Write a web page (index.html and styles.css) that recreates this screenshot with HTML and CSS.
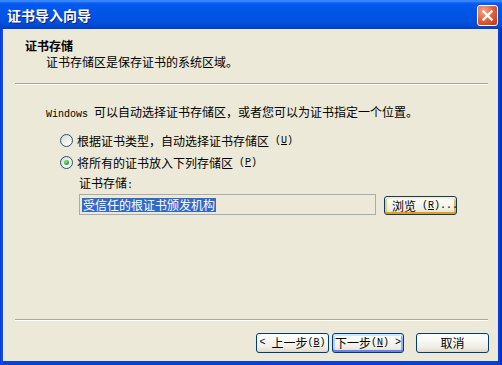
FILE: index.html
```html
<!DOCTYPE html>
<html>
<head>
<meta charset="utf-8">
<link rel="stylesheet" href="styles.css">
</head>
<body>
<div class="window">
  <div class="titlebar">
    <span class="title">证书导入向导</span>
    <div class="close">
      <svg width="19" height="19" viewBox="0 0 19 19"><path d="M5.5 5.5 L13.5 13.5 M13.5 5.5 L5.5 13.5" stroke="#fff" stroke-width="2.4" stroke-linecap="square" fill="none"/></svg>
    </div>
  </div>
  <div class="client">
    <div class="header">
      <div class="h-title">证书存储</div>
      <div class="h-sub">证书存储区是保存证书的系统区域。</div>
    </div>
    <div class="sep"></div>
    <div class="content">
      <div class="intro"><span class="lat">Windows </span>可以自动选择证书存储区，或者您可以为证书指定一个位置。</div>
      <div class="radio-row"><span class="radio"></span>根据证书类型，自动选择证书存储区<span class="lat"> (<u>U</u>)</span></div>
      <div class="radio-row second"><span class="radio checked"></span>将所有的证书放入下列存储区<span class="lat"> (<u>P</u>)</span></div>
      <div class="field-label">证书存储<span class="lat">:</span></div>
      <div class="store-row">
        <div class="field"><span class="sel">受信任的根证书颁发机构</span></div>
        <div class="btn browse">浏览<span class="lat"> (<u>R</u>)...</span></div>
      </div>
    </div>
    <div class="sep"></div>
    <div class="actions">
      <div class="btn back"><span class="lat">&lt; </span>上一步<span class="lat">(<u>B</u>)</span></div>
      <div class="btn next">下一步<span class="lat">(<u>N</u>) &gt;</span></div>
      <div class="btn cancel">取消</div>
    </div>
  </div>
</div>
</body>
</html>
```
FILE: styles.css
```css
html, body {
  margin: 0;
  padding: 0;
  background: #ece9d8;
}
.window {
  width: 502px;
  height: 365px;
  display: flex;
  flex-direction: column;
  background: linear-gradient(to right, #0831d9 0, #1657e6 2px, #0a3fd8 3px, #0a3fd8 498px, #0a3ad6 500px, #0024b0 502px);
  font-family: "Noto Sans CJK SC", "Liberation Sans", sans-serif;
  font-size: 12px;
  color: #000;
}
.titlebar {
  height: 29px;
  flex: none;
  display: flex;
  align-items: center;
  justify-content: space-between;
  padding: 0 4px 0 7px;
  box-sizing: border-box;
  background: linear-gradient(to bottom, #2b7cf7 0, #3f8fff 1px, #0f5ef0 3px, #0058ee 5px, #0055e8 12px, #0053e2 18px, #0050dc 23px, #0046cf 27px, #003dc0 29px);
}
.title {
  color: #fff;
  font-weight: bold;
  font-size: 14px;
  line-height: 18px;
  margin-top: 1px;
  text-shadow: 1px 1px 0 #0a1e8a;
  letter-spacing: 0;
}
.close {
  width: 19px;
  height: 19px;
  margin-top: 2px;
  border: 1px solid #fff;
  border-radius: 3px;
  background: radial-gradient(circle at 30% 25%, #f3a487 0, #e4663f 45%, #cf4420 80%, #c13512 100%);
  display: flex;
  align-items: center;
  justify-content: center;
}
.close svg { display: block; }
.client {
  flex: 1;
  margin: 0 4px 4px 3px;
  background: #ece9d8;
  display: flex;
  flex-direction: column;
  border-left: 1px solid #f4f2e8;
}
.header {
  height: 54px;
  flex: none;
  box-sizing: border-box;
  padding: 9px 0 0 21px;
}
.h-title {
  font-weight: bold;
  line-height: 16px;
}
.h-sub {
  line-height: 16px;
  margin-left: 21px;
}
.sep {
  flex: none;
  height: 0;
  margin: 0 10px 0 11px;
  border-top: 1px solid #aca899;
  border-bottom: 1px solid #fff;
}
.content {
  flex: 1;
  padding: 19px 0 0 42px;
}
.lat {
  font-family: "Liberation Mono", "DejaVu Sans Mono", monospace;
  font-size: 10px;
}
.intro {
  line-height: 16px;
  white-space: nowrap;
}
.radio-row {
  display: flex;
  align-items: center;
  height: 16px;
  margin: 9px 0 0 14px;
  white-space: pre;
}
.radio-row.second {
  margin-top: 6px;
}
.radio {
  width: 11px;
  height: 11px;
  border: 1px solid #1c5180;
  border-radius: 50%;
  background: linear-gradient(135deg, #d8d8d0 0, #f2f2ee 55%, #ffffff 100%);
  margin-right: 4px;
  display: flex;
  align-items: center;
  justify-content: center;
  flex: none;
}
.radio.checked::after {
  content: "";
  width: 5px;
  height: 5px;
  border-radius: 50%;
  background: radial-gradient(circle at 35% 35%, #8ee68e 0, #3bb53b 50%, #1e8f1e 100%);
}
.field-label {
  line-height: 16px;
  margin: 5px 0 0 33px;
}
.store-row {
  display: flex;
  align-items: flex-start;
  margin-left: 33px;
}
.field {
  width: 297px;
  height: 21px;
  box-sizing: border-box;
  border: 1px solid #a5acb2;
  background: #ece9d8;
  padding: 3px 0 0 2px;
  display: flex;
  align-items: flex-start;
}
.sel {
  background: #316ac5;
  color: #fff;
  line-height: 14px;
  height: 14px;
  padding: 0 1px;
}
.btn {
  box-sizing: border-box;
  height: 20px;
  border: 1px solid #003c74;
  border-radius: 3px;
  background: linear-gradient(to bottom, #ffffff 0, #f7f7f3 40%, #eeede5 75%, #dcd8ca 100%);
  display: flex;
  align-items: center;
  justify-content: center;
  line-height: 16px;
  white-space: pre;
}
.browse {
  width: 73px;
  height: 19px;
  margin: 2px 0 0 8px;
  box-shadow: inset 0 2px 0 #ffeec2, inset 0 -2px 0 #e5a01a, inset 2px 0 0 #fbca6a, inset -2px 0 0 #f5b83a;
  justify-content: flex-start;
  padding-left: 7px;
}
.actions {
  flex: none;
  display: flex;
  justify-content: flex-end;
  padding: 12px 9px 8px 0;
}
.back { width: 73px; }
.next {
  width: 72px;
  margin-left: 3px;
  box-shadow: inset 0 2px 0 #cee7ff, inset 0 -2px 0 #6982ee, inset 2px 0 0 #b8d0f6, inset -2px 0 0 #98b0ee;
}
.cancel {
  width: 73px;
  margin-left: 12px;
}
u { text-decoration: underline; }
```
